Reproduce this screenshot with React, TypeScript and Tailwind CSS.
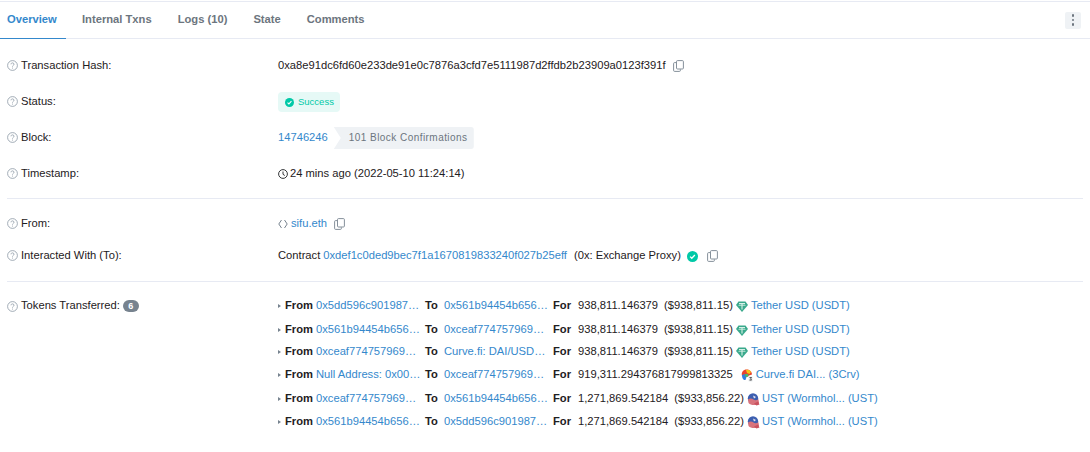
import React from "react";

const Help = () => (
  <svg width="11" height="11" viewBox="0 0 11 11" fill="none" className="shrink-0">
    <circle cx="5.5" cy="5.5" r="4.9" stroke="#8c98a4" strokeWidth="0.8" />
    <path d="M4 4.3c0-.9.7-1.4 1.5-1.4s1.5.5 1.5 1.3c0 1.2-1.5 1.2-1.5 2.4" stroke="#8c98a4" strokeWidth="0.8" />
    <circle cx="5.5" cy="8" r="0.5" fill="#8c98a4" />
  </svg>
);

const Copy = () => (
  <svg width="11" height="12" viewBox="0 0 11 12" fill="none" className="shrink-0">
    <rect x="3.5" y="0.6" width="6.9" height="8.4" rx="1" stroke="#77838f" strokeWidth="0.9" />
    <path d="M3 2.6H1.6a1 1 0 0 0-1 1v6.8a1 1 0 0 0 1 1h4.8a1 1 0 0 0 1-1V9.4" stroke="#77838f" strokeWidth="0.9" />
  </svg>
);

const Check = ({ size }: { size: number }) => (
  <svg width={size} height={size} viewBox="0 0 12 12" className="shrink-0">
    <circle cx="6" cy="6" r="6" fill="#00c9a7" />
    <path d="M3.4 6.1l1.8 1.8 3.4-3.6" stroke="#fff" strokeWidth="1.4" fill="none" />
  </svg>
);

const Tether = () => (
  <svg width="12" height="11" viewBox="0 0 12 11" className="shrink-0">
    <path d="M2.5 0.5h7L12 4l-6 7-6-7z" fill="#3aa98c" />
    <path d="M3 2.6h6M6 2.6v6" stroke="#d8f0e8" strokeWidth="1.1" />
    <path d="M2.5 4.4h7" stroke="#d8f0e8" strokeWidth="0.7" />
  </svg>
);

const Curve = () => (
  <svg width="12" height="13" viewBox="0 0 12 13" className="shrink-0">
    <path d="M1 7C0 3 2.5.5 5.5.5S11 2.500 11 5.500L8 6.500 6 8z" fill="#e8442e" />
    <path d="M5 1c2-.6 4 .2 5 2L8.500 5 6 4z" fill="#f5c518" />
    <path d="M1 6l3-1 1.500 3-1 3H3C1.500 10 1 8 1 6z" fill="#2f7fe0" />
    <path d="M4 5h3l.500 2.500-3 .500z" fill="#48b868" />
    <path d="M7.500 7.500h4v5h-4z" fill="#e9ecef" />
    <path d="M8.500 8.500h2l-.800 1.300.800 1.300h-2" stroke="#333" strokeWidth="0.8" fill="none" />
  </svg>
);

const Ust = () => (
  <svg width="13" height="13" viewBox="0 0 13 13" className="shrink-0">
    <circle cx="6" cy="5.500" r="5.200" fill="#3d5fb0" />
    <path d="M1 6.500c2-1.500 4-1 5.500 0s3 1 5-.300L12 10c-1.500 2.500-8 3-10.500 0z" fill="#d8737c" />
    <path d="M6 2.500l3 1.500-2 1.500z" fill="#e8e8f2" />
    <path d="M7 10.500l4-2 1.500 3-3 1z" fill="#c9515e" />
  </svg>
);

const tokens = [
  { h: "h-[24px]", f: "0x5dd596c901987…", t: "0x561b94454b656…", a: "938,811.146379", v: "($938,811.15)", i: "tether", n: "Tether USD (USDT)" },
  { h: "h-[24px]", f: "0x561b94454b656…", t: "0xceaf774757969…", a: "938,811.146379", v: "($938,811.15)", i: "tether", n: "Tether USD (USDT)" },
  { h: "h-[20px]", f: "0xceaf774757969…", t: "Curve.fi: DAI/USD…", a: "938,811.146379", v: "($938,811.15)", i: "tether", n: "Tether USD (USDT)" },
  { h: "h-[26px]", f: "Null Address: 0x00…", t: "0xceaf774757969…", a: "919,311.294376817999813325", v: "", i: "curve", n: "Curve.fi DAI... (3Crv)" },
  { h: "h-[22px]", f: "0xceaf774757969…", t: "0x561b94454b656…", a: "1,271,869.542184", v: "($933,856.22)", i: "ust", n: "UST (Wormhol... (UST)" },
  { h: "h-[24px]", f: "0x561b94454b656…", t: "0x5dd596c901987…", a: "1,271,869.542184", v: "($933,856.22)", i: "ust", n: "UST (Wormhol... (UST)" },
];

const Label = ({ text, badge }: { text: string; badge?: string }) => (
  <div className="w-[278px] shrink-0 flex items-center gap-[3px] pl-[7px] text-[#1e2022]">
    <Help />
    <span>{text}</span>
    {badge && (
      <span className="h-[12px] w-[16px] rounded-full bg-[#77838f] text-white text-[9px] font-bold flex items-center justify-center">
        {badge}
      </span>
    )}
  </div>
);

export default function App() {
  return (
    <div className="w-[1090px] h-[452px] bg-white overflow-hidden text-[11.2px] leading-none text-[#1e2022] font-['Liberation_Sans',Arial,sans-serif]">
      <div className="h-[38px] mt-px border-t border-b border-[#e7eaf3] flex items-stretch justify-between">
        <div className="flex items-stretch font-bold text-[#6c757e] pl-[7px]">
          <div className="w-[59px] -ml-[7px] pl-[7px] box-content border-b-[1px] border-[#3488cc] text-[#3488cc] flex items-center -mb-px">Overview</div>
          <div className="ml-[16px] flex items-center">Internal Txns</div>
          <div className="ml-[26px] flex items-center">Logs (10)</div>
          <div className="ml-[26px] flex items-center">State</div>
          <div className="ml-[26px] flex items-center">Comments</div>
        </div>
        <div className="mr-[9px] self-center">
          <div className="w-[16px] h-[17px] rounded-[2px] bg-[#eff2f5] flex flex-col items-center justify-center gap-[2px]">
            <span className="w-[2.500px] h-[2.500px] rounded-full bg-[#6c757e]" />
            <span className="w-[2.500px] h-[2.500px] rounded-full bg-[#6c757e]" />
            <span className="w-[2.500px] h-[2.500px] rounded-full bg-[#6c757e]" />
          </div>
        </div>
      </div>

      <div className="pt-[9px]">
        <div className="h-[36px] flex items-center">
          <Label text="Transaction Hash:" />
          <span>0xa8e91dc6fd60e233de91e0c7876a3cfd7e5111987d2ffdb2b23909a0123f391f</span>
          <span className="ml-[7px]"><Copy /></span>
        </div>
        <div className="h-[36px] flex items-center">
          <Label text="Status:" />
          <span className="h-[20px] w-[62px] rounded-[4px] bg-[#e6f9f6] text-[#00c9a7] text-[9.500px] flex items-center gap-[4px] pl-[7px]">
            <Check size={9} /> Success
          </span>
        </div>
        <div className="h-[36px] flex items-center">
          <Label text="Block:" />
          <span className="text-[#3488cc]">14746246</span>
          <span className="ml-[6px] h-[22px] w-[140px] rounded-r-[3px] bg-[#eff2f5] text-[#6c757e] text-[10px] tracking-[0.45px] flex items-center pl-[15px] [clip-path:polygon(0_0,100%_0,100%_100%,0_100%,7px_50%)]">
            101 Block Confirmations
          </span>
        </div>
        <div className="h-[36px] flex items-center">
          <Label text="Timestamp:" />
          <svg width="10" height="10" viewBox="0 0 10 10" fill="none" className="shrink-0 mr-[2px]">
            <circle cx="5" cy="5" r="4.400" stroke="#1e2022" strokeWidth="0.9" />
            <path d="M5 2.500V5.300L6.800 6.500" stroke="#1e2022" strokeWidth="0.9" />
          </svg>
          <span>24 mins ago (2022-05-10 11:24:14)</span>
        </div>

        <div className="mx-[7px] mt-[6px] border-t border-[#e7eaf3]" />

        <div className="mt-[9px] h-[32px] flex items-center">
          <Label text="From:" />
          <svg width="10" height="10" viewBox="0 0 10 10" fill="none" className="shrink-0 mr-[3px]">
            <path d="M3.500 1L.8 5l2.700 4" stroke="#77838f" strokeWidth="1" />
            <path d="M6.500 1l2.700 4-2.700 4" stroke="#77838f" strokeWidth="1" />
          </svg>
          <span className="text-[#3488cc]">sifu.eth</span>
          <span className="ml-[7px]"><Copy /></span>
        </div>
        <div className="h-[32px] flex items-center">
          <Label text="Interacted With (To):" />
          <span>Contract</span>
          <span className="ml-[3px] text-[#3488cc]">0xdef1c0ded9bec7f1a1670819833240f027b25eff</span>
          <span className="ml-[7px]">(0x: Exchange Proxy)</span>
          <span className="ml-[6px]"><Check size={11} /></span>
          <span className="ml-[9px]"><Copy /></span>
        </div>

        <div className="mx-[7px] mt-[9px] border-t border-[#e7eaf3]" />

        <div className="mt-[12px] flex items-start">
          <div className="h-[24px] flex items-center"><Label text="Tokens Transferred:" badge="6" /></div>
          <div className="flex flex-col">
            {tokens.map((r, i) => (
              <div key={i} className={`${r.h} flex items-center`}>
                <span className="w-0 h-0 border-y-[2.500px] border-y-transparent border-l-[3px] border-l-[#77838f] mr-[4px]" />
                <span className="w-[31px] font-bold">From</span>
                <span className="w-[109px] text-[#3488cc] whitespace-nowrap">{r.f}</span>
                <span className="w-[19px] font-bold">To</span>
                <span className="w-[109px] text-[#3488cc] whitespace-nowrap">{r.t}</span>
                <span className="w-[25px] font-bold">For</span>
                <span className="whitespace-nowrap">{r.a}</span>
                {r.v && <span className="ml-[6px] whitespace-nowrap">{r.v}</span>}
                {r.i === "tether" && <span className="ml-[3px] mr-[3px]"><Tether /></span>}
                {r.i === "curve" && <span className="ml-[8px] mr-[3px]"><Curve /></span>}
                {r.i === "ust" && <span className="ml-[3px] mr-[2px]"><Ust /></span>}
                <span className="text-[#3488cc] whitespace-nowrap">{r.n}</span>
              </div>
            ))}
          </div>
        </div>
      </div>
    </div>
  );
}
